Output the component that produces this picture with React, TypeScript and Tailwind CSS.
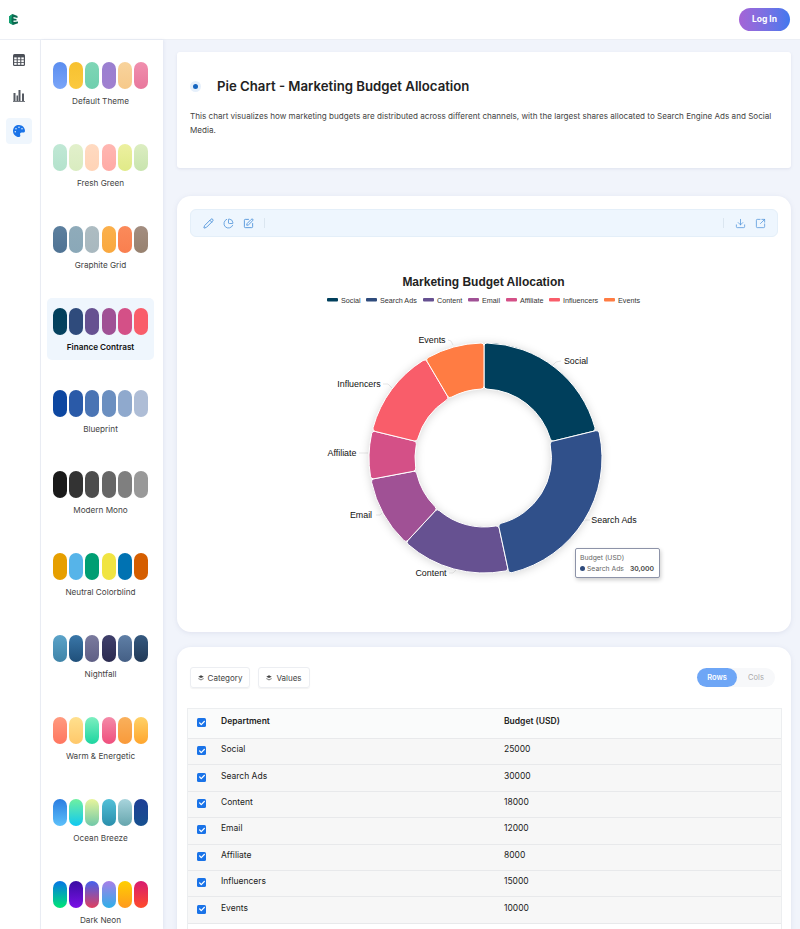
import { Pencil, PieChart, SquarePen, Download, SquareArrowOutUpRight } from "lucide-react";
import { FaPalette, FaCheck } from "react-icons/fa";

const themes = [
  { name: "Default Theme", colors: [["#5b8def", "#7aa5f8"], ["#f7c12f", "#fbc93f"], ["#7fd6b6", "#6fcfae"], ["#9a7fd0", "#a080d0"], ["#f8d39c", "#f6c98a"], ["#f08fae", "#e8779c"]] },
  { name: "Fresh Green", colors: [["#c0e8d5", "#b4e2cc"], ["#e2f0cb", "#d9ecc0"], ["#ffdac1", "#ffd3b6"], ["#ffb7b2", "#ffaaa5"], ["#ecf0a0", "#e0ea88"], ["#dcedc1", "#c8e4ae"]] },
  { name: "Graphite Grid", colors: [["#5c7f9e", "#4f7394"], ["#8fabba", "#8aa8b8"], ["#adbcc2", "#a8b8bf"], ["#fbb04c", "#f9a83e"], ["#fb8a5a", "#f97f4f"], ["#a38d80", "#97816f"]] },
  { name: "Finance Contrast", colors: [["#003f5c", "#06425f"], ["#2f4b7c", "#2f4b7c"], ["#665191", "#665191"], ["#a05195", "#a05195"], ["#d45087", "#d45087"], ["#f95d6a", "#f95d6a"]] },
  { name: "Blueprint", colors: [["#0d47a1", "#0d47a1"], ["#2a5aa8", "#2a5aa8"], ["#4a74b4", "#4a74b4"], ["#6b8fc0", "#6b8fc0"], ["#8fa9cd", "#8fa9cd"], ["#aebdd6", "#aebdd6"]] },
  { name: "Modern Mono", colors: [["#1a1a1a", "#1a1a1a"], ["#333333", "#333333"], ["#4d4d4d", "#4d4d4d"], ["#666666", "#666666"], ["#7f7f7f", "#7f7f7f"], ["#999999", "#999999"]] },
  { name: "Neutral Colorblind", colors: [["#e69f00", "#e69f00"], ["#56b4e9", "#56b4e9"], ["#009e73", "#009e73"], ["#f0e442", "#f0e442"], ["#0072b2", "#0072b2"], ["#d55e00", "#d55e00"]] },
  { name: "Nightfall", colors: [["#5ba3c9", "#3f84a8"], ["#3a77a8", "#1f4f7a"], ["#7a7a9e", "#5f5f85"], ["#3f3f6b", "#2b2b50"], ["#5f7fa6", "#445f85"], ["#35597f", "#223a58"]] },
  { name: "Warm & Energetic", colors: [["#ff9a7f", "#ff7660"], ["#ffe08e", "#ffc86a"], ["#7defc0", "#1dd5a0"], ["#f48aa8", "#ef4f7d"], ["#f9b05c", "#f99a3a"], ["#ffd166", "#ffa62e"]] },
  { name: "Ocean Breeze", colors: [["#2a7de1", "#5cc0fa"], ["#6ff0a0", "#10c8f0"], ["#e8f59c", "#70c8a8"], ["#52c0d8", "#2a8fac"], ["#a8d4dc", "#66a6ae"], ["#1e3f96", "#16508f"]] },
  { name: "Dark Neon", colors: [["#0575e6", "#00e676"], ["#3a0ca3", "#7a10e6"], ["#4361ee", "#e0405f"], ["#a77fe8", "#2fb0e8"], ["#ffcf00", "#ff9a1f"], ["#d81b70", "#ff4b2b"]] },
];

const rows = [
  ["Social", "25000"],
  ["Search Ads", "30000"],
  ["Content", "18000"],
  ["Email", "12000"],
  ["Affiliate", "8000"],
  ["Influencers", "15000"],
  ["Events", "10000"],
];

const slices = [
  { name: "Social", value: 25000, color: "#003f5c" },
  { name: "Search Ads", value: 30000, color: "#30508a" },
  { name: "Content", value: 18000, color: "#665191" },
  { name: "Email", value: 12000, color: "#a05195" },
  { name: "Affiliate", value: 8000, color: "#d45087" },
  { name: "Influencers", value: 15000, color: "#f95d6a" },
  { name: "Events", value: 10000, color: "#ff7c43" },
];

const labels = [
  { text: "Social", x: 576, y: 361, line: "M561 361 L556 362 L552 366" },
  { text: "Search Ads", x: 614, y: 520, line: "M590 520 L585 520 L581 516" },
  { text: "Content", x: 431, y: 573, line: "M449 573 L453 573 L456 570" },
  { text: "Email", x: 361, y: 515, line: "M376 515 L380 515 L384 511" },
  { text: "Affiliate", x: 342, y: 453, line: "M359 453 L368 453" },
  { text: "Influencers", x: 359, y: 384, line: "M383 384 L388 384 L392 388" },
  { text: "Events", x: 432, y: 340, line: "M448 340 L451 341 L453 345" },
];

const legend = [
  { name: "Social", x: 327, color: "#003f5c" },
  { name: "Search Ads", x: 366, color: "#2f4b7c" },
  { name: "Content", x: 423, color: "#665191" },
  { name: "Email", x: 468, color: "#a05195" },
  { name: "Affiliate", x: 506, color: "#d45087" },
  { name: "Influencers", x: 549, color: "#f95d6a" },
  { name: "Events", x: 604, color: "#ff7c43" },
];

const CX = 484;
const CY = 458;

function polar(r: number, deg: number) {
  const a = ((deg - 90) * Math.PI) / 180;
  return `${(CX + r * Math.cos(a)).toFixed(2)} ${(CY + r * Math.sin(a)).toFixed(2)}`;
}

function sector(r0: number, r1: number, a0: number, a1: number) {
  const c = 3;
  const dOut = ((c / r1) * 180) / Math.PI;
  const dIn = ((c / r0) * 180) / Math.PI;
  const large = a1 - a0 > 180 ? 1 : 0;
  return [
    `M${polar(r1 - c, a0)}`,
    `Q${polar(r1, a0)} ${polar(r1, a0 + dOut)}`,
    `A${r1} ${r1} 0 ${large} 1 ${polar(r1, a1 - dOut)}`,
    `Q${polar(r1, a1)} ${polar(r1 - c, a1)}`,
    `L${polar(r0 + c, a1)}`,
    `Q${polar(r0, a1)} ${polar(r0, a1 - dIn)}`,
    `A${r0} ${r0} 0 ${large} 0 ${polar(r0, a0 + dIn)}`,
    `Q${polar(r0, a0)} ${polar(r0 + c, a0)}`,
    "Z",
  ].join(" ");
}

function DonutChart() {
  const total = slices.reduce((s, x) => s + x.value, 0);
  let angle = 0;
  const parts = slices.map((s) => {
    const a0 = angle;
    angle += (s.value / total) * 360;
    return { ...s, a0, a1: angle };
  });
  return (
    <svg width="614" height="390" viewBox="177 245 614 390" className="block">
      <text x="483.500" y="286" textAnchor="middle" fontSize="12" fontWeight="700" fill="#222" fontFamily="Liberation Sans, sans-serif">
        Marketing Budget Allocation
      </text>
      {legend.map((l) => (
        <g key={l.name}>
          <rect x={l.x} y="298" width="11" height="3.500" rx="1" fill={l.color} />
          <text x={l.x + 14} y="302.500" fontSize="7.200" fill="#333" fontFamily="Liberation Sans, sans-serif">
            {l.name}
          </text>
        </g>
      ))}
      {labels.map((l) => (
        <g key={l.text}>
          <path d={l.line} fill="none" stroke="#dddddd" strokeWidth="0.700" />
          <text x={l.x} y={l.y + 3} textAnchor="middle" fontSize="8.900" fill="#111" fontFamily="Liberation Sans, sans-serif">
            {l.text}
          </text>
        </g>
      ))}
      <g className="drop-shadow-[0_1px_4px_rgba(0,0,0,0.16)]">
        {parts.filter((p) => p.name !== "Search Ads").map((p) => (
          <path key={p.name} d={sector(69, 115, p.a0, p.a1)} fill={p.color} stroke="#fff" strokeWidth="1" />
        ))}
        {parts.filter((p) => p.name === "Search Ads").map((p) => (
          <path key={p.name} d={sector(67.500, 118, p.a0, p.a1)} fill={p.color} stroke="#fff" strokeWidth="1" />
        ))}
      </g>
    </svg>
  );
}

function Check() {
  return (
    <span className="mt-[2px] flex h-[9px] w-[9px] items-center justify-center rounded-[1.5px] bg-[#1a73e8]">
      <FaCheck className="h-[6px] w-[6px] text-white" />
    </span>
  );
}

function CubeDot() {
  return (
    <svg width="6" height="6" viewBox="0 0 6 6">
      <path d="M3 0.300 L5.700 1.700 L3 3.100 L0.300 1.700 Z" fill="#444" />
      <path d="M0.300 2.900 L3 4.300 L5.700 2.900 L5.700 4 L3 5.600 L0.300 4 Z" fill="#888" />
    </svg>
  );
}

export default function App() {
  return (
    <div className="flex h-[929px] w-[800px] flex-col overflow-hidden bg-[#f1f4fb] font-['Inter',sans-serif] text-[#222]">
      <header className="flex h-[40px] shrink-0 items-center justify-between border-b border-[#eceff5] bg-white pl-[9px] pr-[10px]">
        <svg width="9" height="11" viewBox="0 0 9 11">
          <path d="M3.500 0 L8.500 2 L8.500 4 L4.500 3 L4.500 4.500 L7.500 5 L7.500 6.500 L4.500 6.500 L4.500 8 L9 7.500 L9 9.300 L4 11 L0 8.800 L0 2.500 Z" fill="#0a6a50" />
          <path d="M0 2.500 L3.500 0 L2.500 4.500 L2.500 7.500 L4 11 L0 8.800 Z" fill="#12a171" />
        </svg>
        <button className="h-[23px] w-[51px] rounded-full bg-gradient-to-r from-[#a463d6] to-[#3f78ee] text-[8.500px] font-bold text-white">
          Log In
        </button>
      </header>

      <div className="flex min-h-0 flex-1">
        <nav className="flex w-[41px] shrink-0 flex-col border-r border-[#eceff5] bg-white pl-[6px] pt-[7px]">
          <div className="flex h-[26px] w-[26px] items-center justify-center">
            <svg width="12" height="12" viewBox="0 0 12 12">
              <rect width="12" height="12" rx="1.500" fill="#4b4f57" />
              <g fill="#fff">
                <rect x="1.200" y="3.400" width="2.500" height="2" />
                <rect x="4.750" y="3.400" width="2.500" height="2" />
                <rect x="8.300" y="3.400" width="2.500" height="2" />
                <rect x="1.200" y="6.200" width="2.500" height="2" />
                <rect x="4.750" y="6.200" width="2.500" height="2" />
                <rect x="8.300" y="6.200" width="2.500" height="2" />
                <rect x="1.200" y="9" width="2.500" height="1.800" />
                <rect x="4.750" y="9" width="2.500" height="1.800" />
                <rect x="8.300" y="9" width="2.500" height="1.800" />
              </g>
            </svg>
          </div>
          <div className="mt-[9px] flex h-[26px] w-[26px] items-center justify-center">
            <svg width="12" height="13" viewBox="0 0 12 13" fill="#555a62">
              <rect x="0.500" y="4" width="2" height="8" />
              <rect x="3.500" y="6.500" width="1.500" height="5.500" />
              <rect x="5.500" y="1" width="2" height="11" />
              <rect x="9" y="4.500" width="2" height="7.500" />
              <rect x="0" y="12" width="12" height="0.800" />
            </svg>
          </div>
          <div className="mt-[10px] flex h-[26px] w-[26px] items-center justify-center rounded-[4px] bg-[#eff6fd] text-[#1a73e8]">
            <FaPalette className="h-[12px] w-[12px]" />
          </div>
        </nav>

        <aside className="flex w-[122px] shrink-0 flex-col items-start bg-white pl-[6px] pt-[12px] shadow-[1px_0_3px_rgba(120,130,170,0.12)]">
          {themes.map((t) => (
            <div
              key={t.name}
              className={
                t.name === "Finance Contrast"
                  ? "mb-[19.900px] flex h-[62px] w-[107px] shrink-0 flex-col items-center rounded-[5px] bg-[#eff6fd] pt-[10px]"
                  : "mb-[19.900px] flex h-[62px] w-[107px] shrink-0 flex-col items-center pt-[10px]"
              }
            >
              <div className="flex gap-[2.300px]">
                {t.colors.map((c, i) => (
                  <span
                    key={i}
                    className="h-[27px] w-[14px] rounded-full"
                    style={{ backgroundImage: `linear-gradient(${c[0]}, ${c[1]})` }}
                  />
                ))}
              </div>
              <span className={t.name === "Finance Contrast" ? "mt-[6px] text-[8.200px] font-semibold leading-[12px] text-[#111]" : "mt-[6px] text-[8.200px] leading-[12px] text-[#444]"}>
                {t.name}
              </span>
            </div>
          ))}
        </aside>

        <main className="flex min-w-0 flex-1 flex-col pl-[14px] pr-[9px] pt-[12px]">
          <section className="h-[116px] shrink-0 rounded-[3px] bg-white px-[13px] pt-[27px] shadow-[0_1px_3px_rgba(120,130,170,0.15)]">
            <div className="flex items-center">
              <span className="flex h-[11px] w-[11px] items-center justify-center rounded-full bg-[#e6f0fb]">
                <span className="h-[5px] w-[5px] rounded-full bg-[#1565c0]" />
              </span>
              <h1 className="ml-[16px] text-[13.200px] font-semibold leading-[14px] text-[#222]">Pie Chart - Marketing Budget Allocation</h1>
            </div>
            <p className="mt-[16px] text-[8.100px] leading-[14px] text-[#444]">
              This chart visualizes how marketing budgets are distributed across different channels, with the largest shares allocated to Search Engine Ads and Social Media.
            </p>
          </section>

          <section className="mt-[28px] h-[436px] shrink-0 rounded-[14px] bg-white pt-[13px] shadow-[0_1px_5px_rgba(120,130,170,0.15)]">
            <div className="mx-[13px] flex h-[28px] items-center justify-between rounded-[6px] border border-[#e4eff9] bg-[#eef6fe] pl-[12px] pr-[11px] text-[#4a90d9]">
              <div className="flex items-center gap-[9px]">
                <Pencil className="h-[11px] w-[11px]" strokeWidth={1.900} />
                <PieChart className="h-[11px] w-[11px]" strokeWidth={1.700} />
                <SquarePen className="h-[11px] w-[11px]" strokeWidth={1.900} />
                <span className="ml-[1px] h-[10px] w-px bg-[#dbe6f0]" />
              </div>
              <div className="flex items-center gap-[9px]">
                <span className="mr-[2px] h-[10px] w-px bg-[#dbe6f0]" />
                <Download className="h-[11px] w-[11px]" strokeWidth={1.600} />
                <SquareArrowOutUpRight className="h-[11px] w-[11px]" strokeWidth={1.600} />
              </div>
            </div>
            <div className="relative mt-[8px]">
              <DonutChart />
              <div className="absolute left-[397.500px] top-[303px] h-[30px] w-[85px] rounded-[2px] border border-[#8d93a8] bg-white px-[4.500px] pt-[3px] text-[6.800px] leading-[11px] text-[#666] shadow-[1px_2px_4px_rgba(0,0,0,0.2)]">
                <div>Budget (USD)</div>
                <div className="flex items-center">
                  <span className="h-[4.500px] w-[4.500px] rounded-full bg-[#2f4b7c]" />
                  <span className="ml-[2.500px]">Search Ads</span>
                  <span className="ml-auto font-semibold text-[#444]">30,000</span>
                </div>
              </div>
            </div>
          </section>

          <section className="mt-[15px] flex-1 rounded-t-[14px] bg-white shadow-[0_1px_5px_rgba(120,130,170,0.15)]">
            <div className="flex items-center justify-between pl-[13px] pr-[16px] pt-[20px]">
              <div className="flex gap-[8px]">
                <button className="flex h-[21px] w-[60px] items-center justify-center gap-[4px] rounded-[3px] border border-[#eceef2] text-[8px] text-[#444] shadow-[0_1px_1px_rgba(0,0,0,0.05)]">
                  <CubeDot />Category
                </button>
                <button className="flex h-[21px] w-[52px] items-center justify-center gap-[4px] rounded-[3px] border border-[#eceef2] text-[8px] text-[#444] shadow-[0_1px_1px_rgba(0,0,0,0.05)]">
                  <CubeDot />Values
                </button>
              </div>
              <div className="flex h-[19px] items-center rounded-full bg-[#f7f8fa]">
                <span className="flex h-[19px] w-[40px] items-center justify-center rounded-full bg-[#6ea6f6] text-[7.500px] font-semibold text-white">Rows</span>
                <span className="flex w-[38px] justify-center text-[7.500px] text-[#aaa]">Cols</span>
              </div>
            </div>
            <div className="ml-[10px] mt-[20px] w-[595px] border border-[#eceef0] text-[8.500px] text-[#222]">
              <div className="flex h-[29px] items-center bg-[#fafbfb] pb-[4px] font-semibold">
                <span className="ml-[9px] w-[24px]"><Check /></span>
                <span className="w-[283px]">Department</span>
                <span>Budget (USD)</span>
              </div>
              {rows.map(([a, b]) => (
                <div key={a} className="flex h-[26.400px] items-center border-t border-[#e8e9eb] bg-[#f7f7f7] pb-[4px]">
                  <span className="ml-[9px] w-[24px]"><Check /></span>
                  <span className="w-[283px]">{a}</span>
                  <span>{b}</span>
                </div>
              ))}
              <div className="h-[26px] border-t border-[#e8e9eb] bg-white" />
            </div>
          </section>
        </main>
      </div>
    </div>
  );
}
